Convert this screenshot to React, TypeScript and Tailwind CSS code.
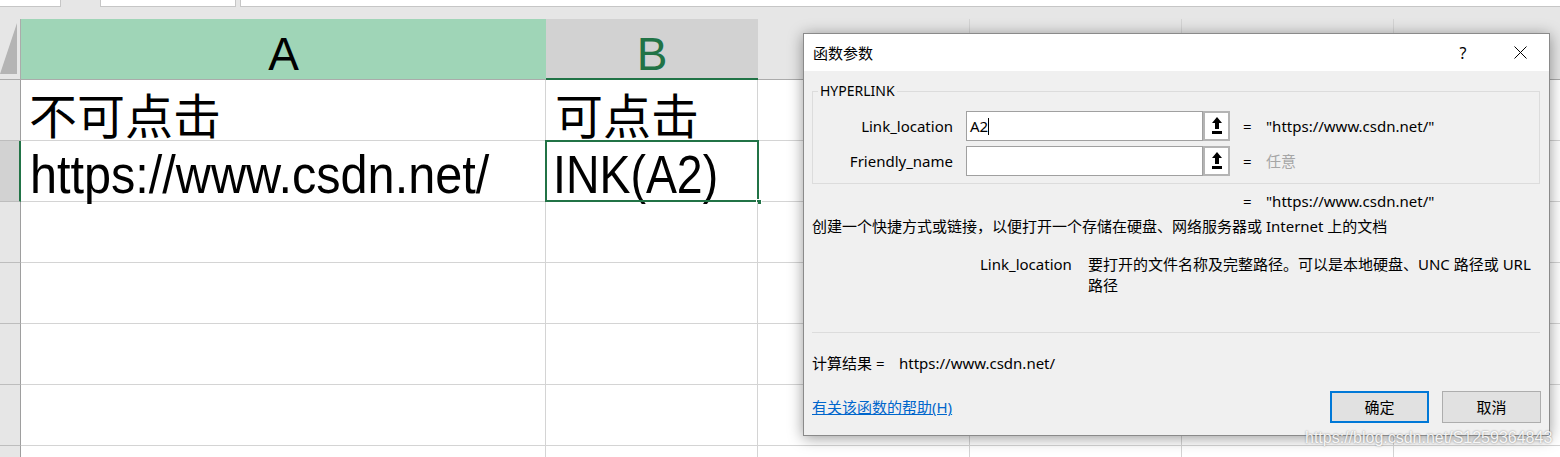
import React from "react";

const UpIcon = () => (
  <svg width="10" height="18" viewBox="0 0 10 18">
    <polygon points="5,0 10,6 7,6 7,12 3,12 3,6 0,6" fill="#000" />
    <rect x="0" y="14" width="10" height="3" fill="#000" />
  </svg>
);

function RefButton() {
  return (
    <div className="w-[27px] h-[30px] border-2 border-[#b4b4b4] bg-white flex items-center justify-center">
      <UpIcon />
    </div>
  );
}

export default function App() {
  const dataRows = [1, 2, 3, 4, 5, 6, 7];
  return (
    <div className="relative w-[1560px] h-[457px] overflow-hidden bg-white font-['Liberation_Sans',sans-serif]">
      {/* top strip */}
      <div className="flex h-[19px] bg-[#e6e6e6]">
        <div className="w-[61px] h-[7px] bg-white border-b border-r border-[#c6c6c6]" />
        <div className="ml-[39px] w-[136px] h-[7px] bg-white border-b border-x border-[#c6c6c6]" />
        <div className="ml-[4px] flex-1 h-[7px] bg-white border-b border-l border-[#c6c6c6]" />
      </div>

      {/* sheet grid */}
      <div className="grid grid-cols-[21px_525px_212px_212px_212px_212px_1fr] grid-rows-[61px_61px_61px_61px_61px_61px_61px_61px]">
        {/* header row */}
        <div className="bg-[#e6e6e6] border-b border-r border-[#ababab] flex items-end">
          <svg width="18" height="52" viewBox="0 0 18 52" className="mb-[4px]">
            <polygon points="17,0 17,51 0,51" fill="#b4b4b4" />
          </svg>
        </div>
        <div className="bg-[#9fd5b7] border-b border-[#ababab] flex justify-center pt-[12px] text-[46px] leading-none text-black">
          A
        </div>
        <div className="bg-[#d2d2d2] border-b-2 border-[#217346] flex justify-center pt-[12px] text-[46px] leading-none text-[#217346]">
          B
        </div>
        <div className="bg-[#e6e6e6] border-b border-r border-[#ababab] border-r-[#d4d4d4]" />
        <div className="bg-[#e6e6e6] border-b border-r border-[#ababab] border-r-[#d4d4d4]" />
        <div className="bg-[#e6e6e6] border-b border-r border-[#ababab] border-r-[#d4d4d4]" />
        <div className="bg-[#e6e6e6] border-b border-[#ababab]" />

        {dataRows.map((r) => (
          <React.Fragment key={r}>
            {r === 2 ? (
              <div className="bg-[#d2d2d2] border-b border-[#bdbdbd] border-r-2 border-r-[#217346]" />
            ) : (
              <div className="bg-[#e6e6e6] border-b border-[#bdbdbd] border-r border-r-[#9e9e9e]" />
            )}
            {/* column A */}
            <div className="border-b border-r border-[#d4d4d4] whitespace-nowrap">
              {r === 1 && (
                <div className="pl-[8px] pt-[9px] text-[48px] leading-none text-black font-['Noto_Sans_CJK_SC',sans-serif]">
                  不可点击
                </div>
              )}
              {r === 2 && (
                <div className="pl-[9px] pt-[6px] text-[54px] leading-none text-black">
                  <span className="inline-block origin-left scale-x-[0.9]">https://www.csdn.net/</span>
                </div>
              )}
            </div>
            {/* column B */}
            <div className="relative border-b border-r border-[#d4d4d4] whitespace-nowrap">
              {r === 1 && (
                <div className="pl-[9px] pt-[9px] text-[48px] leading-none text-black font-['Noto_Sans_CJK_SC',sans-serif]">
                  可点击
                </div>
              )}
              {r === 2 && (
                <>
                  <div className="pl-[7px] pt-[6px] text-[54px] leading-none text-black">
                    <span className="inline-block origin-left scale-x-[0.86]">INK(A2)</span>
                  </div>
                  <div className="absolute left-[-1px] top-[-1px] right-[-2px] bottom-[-1px] border-2 border-[#217346]" />
                  <div className="absolute right-[-5px] bottom-[-4px] w-[6px] h-[6px] bg-[#217346] border border-white" />
                </>
              )}
            </div>
            <div className="border-b border-r border-[#d4d4d4]" />
            <div className="border-b border-r border-[#d4d4d4]" />
            <div className="border-b border-r border-[#d4d4d4]" />
            <div className="border-b border-[#d4d4d4]" />
          </React.Fragment>
        ))}
      </div>

      {/* dialog */}
      <div className="absolute left-[803px] top-[33px] w-[747px] h-[403px] border border-[#8a8a8a] bg-[#f0f0f0] shadow-[0_2px_14px_rgba(0,0,0,0.4)] font-['Noto_Sans','Noto_Sans_CJK_SC',sans-serif] text-[15px] text-black">
        {/* title bar */}
        <div className="h-[37px] bg-white flex items-center">
          <div className="pl-[9px] leading-[20px]">函数参数</div>
          <div className="ml-auto flex items-center gap-[11px] pr-[6px]">
            <div className="w-[46px] h-[30px] flex items-center justify-center text-[16px] leading-none">?</div>
            <div className="w-[46px] h-[30px] flex items-center justify-center">
              <svg width="13" height="13" viewBox="0 0 13 13">
                <path d="M0.5 0.5 L12.5 12.5 M12.5 0.5 L0.5 12.5" stroke="#000" strokeWidth="1" />
              </svg>
            </div>
          </div>
        </div>

        {/* body */}
        <div className="pl-[8px] pr-[9px] flex flex-col">
          {/* group box */}
          <div className="relative mt-[20px] h-[93px] border border-[#dcdcdc] pt-[19px]">
            <div className="absolute left-[5px] top-[-11px] px-[2px] bg-[#f0f0f0] text-[14px] leading-[20px]">
              HYPERLINK
            </div>
            <div className="flex items-center h-[30px]">
              <div className="w-[140px] text-right leading-[20px]">Link_location</div>
              <div className="ml-[13px] w-[237px] h-[30px] border border-[#a0a0a0] bg-white flex items-center pl-[3px]">
                <span className="leading-[20px]">A2</span>
                <span className="w-px h-[17px] bg-black" />
              </div>
              <RefButton />
              <div className="ml-[13px] w-[23px] leading-[20px]">=</div>
              <div className="leading-[20px]">"https://www.csdn.net/"</div>
            </div>
            <div className="flex items-center h-[30px] mt-[5px]">
              <div className="w-[140px] text-right leading-[20px]">Friendly_name</div>
              <div className="ml-[13px] w-[237px] h-[30px] border border-[#a0a0a0] bg-white" />
              <RefButton />
              <div className="ml-[13px] w-[23px] leading-[20px]">=</div>
              <div className="leading-[20px] text-[#a6a6a6]">任意</div>
            </div>
          </div>

          <div className="mt-[7px] flex pl-[431px] leading-[20px]">
            <div className="w-[23px]">=</div>
            <div>"https://www.csdn.net/"</div>
          </div>

          <div className="mt-[5px] leading-[20px] whitespace-nowrap">
            创建一个快捷方式或链接，以便打开一个存储在硬盘、网络服务器或 Internet 上的文档
          </div>

          <div className="mt-[18px] flex leading-[21px]">
            <div className="w-[276px] pl-[168px] shrink-0">Link_location</div>
            <div className="whitespace-nowrap">
              要打开的文件名称及完整路径。可以是本地硬盘、UNC 路径或 URL
              <br />
              路径
            </div>
          </div>

          <div className="mt-[36px] h-px bg-[#dcdcdc]" />

          <div className="mt-[20px] flex leading-[20px]">
            <div className="w-[87px]">计算结果 =</div>
            <div>https://www.csdn.net/</div>
          </div>

          <div className="mt-[18px] flex items-center h-[32px]">
            <a className="text-[#0066cc] underline leading-[20px]">有关该函数的帮助(H)</a>
            <div className="ml-auto flex gap-[13px] -mr-[1px]">
              <button className="w-[99px] h-[32px] border-2 border-[#0078d7] bg-[#e1e1e1] leading-none">确定</button>
              <button className="w-[99px] h-[32px] border border-[#adadad] bg-[#e1e1e1] leading-none">取消</button>
            </div>
          </div>
        </div>
      </div>

      {/* watermark */}
      <div className="absolute left-[1305px] top-[428px] text-[16px] leading-[20px] text-white/90 whitespace-nowrap [text-shadow:0_0_2px_rgba(0,0,0,0.45)]">
        https://blog.csdn.net/S1259364843
      </div>
    </div>
  );
}
